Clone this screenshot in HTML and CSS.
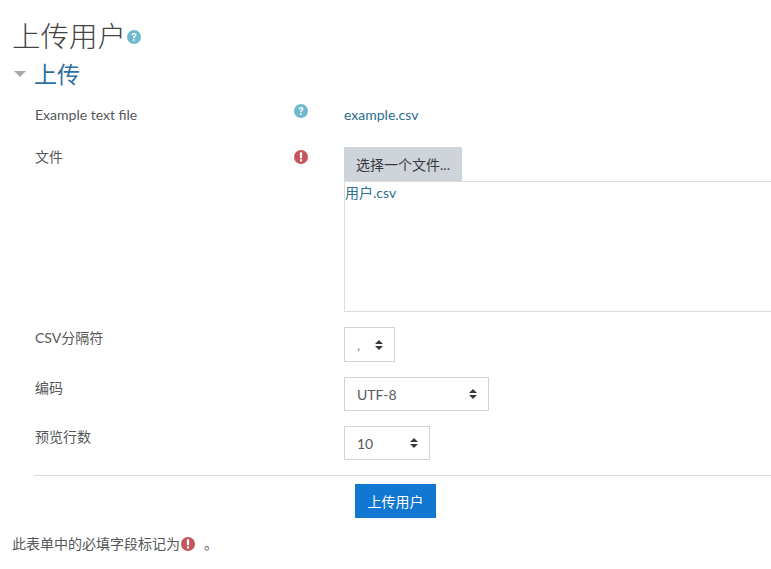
FILE: index.html
```html
<!DOCTYPE html>
<html>
<head>
    <title>上传用户</title>
    <link rel="stylesheet" href="styles.css">
</head>
<body>
    <div class="page">
        <h1 class="title">上传用户<svg class="icon icon-title"><use href="#help"/></svg></h1>
        <h2 class="legend"><span class="caret"></span>上传</h2>

        <svg class="defs" width="0" height="0">
            <symbol id="help" viewBox="0 0 16 16">
                <circle cx="8" cy="8" r="7" fill="#6fb9cf"/>
                <path d="M5.6 6.3c0-1.5 1.1-2.3 2.5-2.3s2.4.8 2.4 2c0 1.9-2.1 1.8-2.1 3.3H7c0-2.2 1.8-2.1 1.8-3.2 0-.5-.3-.8-.8-.8-.6 0-.9.4-.9 1z" fill="#fff"/>
                <rect x="7" y="10.2" width="1.6" height="1.7" fill="#fff"/>
            </symbol>
            <symbol id="required" viewBox="0 0 16 16">
                <circle cx="8" cy="8" r="7" fill="#c4555b"/>
                <rect x="6.9" y="3.2" width="2.2" height="6" rx=".5" fill="#fff"/>
                <rect x="6.9" y="10.3" width="2.2" height="2.2" rx=".5" fill="#fff"/>
            </symbol>
        </svg>

        <form class="form">
            <div class="row row-example">
                <label class="label">Example text file</label>
                <div class="hint"><svg class="icon"><use href="#help"/></svg></div>
                <div class="field"><a class="link" href="#">example.csv</a></div>
            </div>

            <div class="row row-file">
                <label class="label">文件</label>
                <div class="hint"><svg class="icon"><use href="#required"/></svg></div>
                <div class="field">
                    <button type="button" class="btn-file">选择一个文件...</button>
                    <div class="file-list"><a class="link" href="#">用户.csv</a></div>
                </div>
            </div>

            <div class="row">
                <label class="label">CSV分隔符</label>
                <div class="hint"></div>
                <div class="field">
                    <div class="select select-delim"><span class="delim">,</span><span class="arrows"></span></div>
                </div>
            </div>

            <div class="row">
                <label class="label">编码</label>
                <div class="hint"></div>
                <div class="field">
                    <div class="select select-enc"><span>UTF-8</span><span class="arrows"></span></div>
                </div>
            </div>

            <div class="row">
                <label class="label">预览行数</label>
                <div class="hint"></div>
                <div class="field">
                    <div class="select select-rows"><span>10</span><span class="arrows"></span></div>
                </div>
            </div>

            <div class="actions">
                <button type="button" class="btn-primary">上传用户</button>
            </div>
        </form>

        <p class="note">此表单中的必填字段标记为<svg class="icon icon-note"><use href="#required"/></svg><span class="note-end">。</span></p>
    </div>
</body>
</html>
```

FILE: styles.css
```css
html, body {
    margin: 0;
    height: 100%;
    overflow: hidden;
    background-color: #ffffff;
}

body {
    font-family: "Lato", "Noto Sans CJK SC", sans-serif;
    font-size: 14px;
    color: #54575a;
}

.page {
    padding: 18px 0 0 12px;
}

.defs {
    position: absolute;
}

.title {
    display: flex;
    align-items: center;
    height: 36px;
    margin: 0;
    font-size: 28.5px;
    font-weight: 300;
    line-height: 36px;
    color: #444444;
}

.legend {
    display: flex;
    align-items: center;
    height: 36px;
    margin: 2px 0 0 0;
    font-size: 23px;
    font-weight: 400;
    line-height: 36px;
    color: #2f6f9f;
}

.caret {
    width: 0;
    height: 0;
    margin: 0 8px 0 2px;
    border-left: 6px solid transparent;
    border-right: 6px solid transparent;
    border-top: 6px solid #a9a9a9;
}

.icon {
    display: block;
    width: 16px;
    height: 16px;
}

.icon-title {
    margin: 2px 0 0 0;
}

.form {
    margin: 11px 0 0 22px;
}

.row {
    display: flex;
    margin-bottom: 15px;
}

.row-example {
    margin-bottom: 22px;
}

.label {
    width: 258px;
    padding: 1px 0 0 1px;
    line-height: 20px;
}

.hint {
    width: 51px;
}

.row-file .label {
    padding-top: 0;
}

.row-file .hint {
    padding-top: 2px;
}

.row-example .label,
.row-example .field {
    padding-top: 2px;
}

.field {
    flex: 1;
    min-width: 0;
}

.link {
    color: #2a6f8f;
    text-decoration: none;
    line-height: 20px;
}

.btn-file {
    display: block;
    width: 118px;
    height: 34px;
    padding: 0;
    border: none;
    background-color: #ced4da;
    font-family: inherit;
    font-size: 14px;
    color: #373a3c;
}

.file-list {
    height: 131px;
    box-sizing: border-box;
    border: 1px solid #dcdcdc;
    border-right: none;
    line-height: 22px;
}

.select {
    display: flex;
    align-items: center;
    justify-content: space-between;
    box-sizing: border-box;
    height: 34px;
    padding: 0 11px 0 12px;
    border: 1px solid #ced4da;
    color: #555a5e;
}

.select-delim {
    width: 51px;
    height: 35px;
}

.select-enc {
    width: 145px;
}

.select-rows {
    width: 86px;
}

.delim {
    color: #777777;
}

.arrows {
    position: relative;
    width: 8px;
    height: 10px;
}

.arrows::before,
.arrows::after {
    content: "";
    position: absolute;
    left: 0;
    border-left: 4px solid transparent;
    border-right: 4px solid transparent;
}

.arrows::before {
    top: 0;
    border-bottom: 4px solid #373a3c;
}

.arrows::after {
    bottom: 0;
    border-top: 4px solid #373a3c;
}

.actions {
    display: flex;
    justify-content: center;
    padding: 8px 14px 0 0;
    border-top: 1px solid #dddddd;
}

.btn-primary {
    width: 81px;
    height: 34px;
    padding: 0;
    border: none;
    background-color: #1177d1;
    font-family: inherit;
    font-size: 14px;
    color: #ffffff;
}

.note {
    display: flex;
    align-items: center;
    margin: 16px 0 0 0;
    line-height: 20px;
}

.note-end {
    margin-left: 8px;
}
```
